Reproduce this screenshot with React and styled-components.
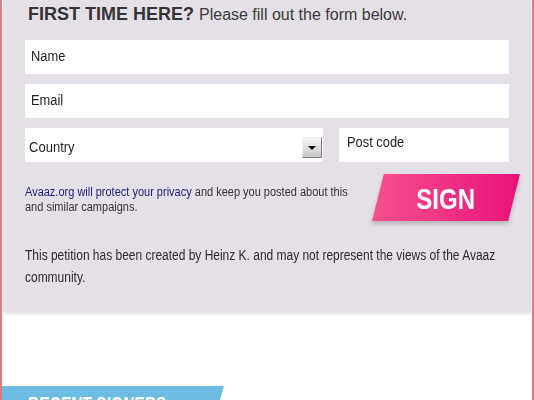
import React from 'react';
import styled, { createGlobalStyle } from 'styled-components';

const GlobalStyle = createGlobalStyle`
  html, body {
    margin: 0;
    padding: 0;
    background: #fff;
  }
  * { box-sizing: border-box; }
`;

const sans = `"Liberation Sans", Arial, sans-serif`;

// the original uses a narrow face; squeeze Liberation Sans to its width
const Narrow = styled.span`
  display: inline-block;
  white-space: nowrap;
  transform: scaleX(${(p) => p.$x || 0.85});
  transform-origin: ${(p) => (p.$center ? '50% 50%' : '0 50%')};
`;

const Page = styled.div`
  width: 534px;
  height: 400px;
  overflow: hidden;
  border-left: 2px solid #e07b7b;
  border-right: 2px solid #e07b7b;
  padding: 0 1px;
  font-family: ${sans};
`;

const Panel = styled.div`
  background: #e5dfe7;
  padding: 2px 22px 23px 22px;
  box-shadow: 0 3px 3px rgba(0, 0, 0, 0.12);
`;

const Heading = styled.h2`
  margin: 0 0 13px 3px;
  font-size: 18px;
  line-height: 24px;
  font-weight: bold;
  color: #333;
  span {
    font-weight: normal;
    font-size: 16px;
    color: #3a3a3a;
  }
`;

const Field = styled.div`
  height: 34px;
  background: #fff;
  display: flex;
  align-items: center;
  padding: 0 6px 2px;
  margin-bottom: 10px;
  font-size: 15.5px;
  color: #1e1e1e;
`;

const Row = styled.div`
  display: flex;
  gap: 16px;
`;

const Select = styled(Field)`
  flex: 0 0 298px;
  margin: 0;
  justify-content: space-between;
  padding: 0 1px 0 4px;
  span { margin-top: 4px; }
`;

const ArrowBtn = styled.div`
  width: 20px;
  height: 21px;
  margin-top: 4px;
  background: linear-gradient(#f6f6f6, #c6c6c6);
  border: 1px solid #7c7c7c;
  border-top-color: #f0f0f0;
  border-left-color: #f0f0f0;
  display: flex;
  align-items: center;
  justify-content: center;
  &::after {
    content: '';
    border-left: 4px solid transparent;
    border-right: 4px solid transparent;
    border-top: 4px solid #000;
    margin-top: 1px;
  }
`;

const PostField = styled(Field)`
  flex: 1;
  margin: 0;
  padding: 0 8px 6px;
`;

const SignRow = styled.div`
  display: flex;
  justify-content: space-between;
  align-items: flex-start;
  margin-top: 12px;
`;

const Privacy = styled.p`
  flex: 1;
  min-width: 0;
  margin: 11px 0 0 0;
  font-size: 12.5px;
  line-height: 15px;
  color: #333;
  a {
    color: #24237a;
    text-decoration: none;
  }
`;

const ButtonShadow = styled.div`
  flex: 0 0 148px;
  margin-right: -11px;
  display: flex;
  filter: drop-shadow(0 3px 2px rgba(0, 0, 0, 0.2));
`;

const SignButton = styled.button`
  width: 148px;
  height: 47px;
  border: none;
  cursor: pointer;
  background: linear-gradient(90deg, #f6518d, #e8127b);
  clip-path: polygon(8% 0, 100% 0, 92% 100%, 0 100%);
  color: #fff;
  font-family: ${sans};
  font-weight: bold;
  font-size: 30px;
  display: flex;
  align-items: center;
  justify-content: center;
  padding: 2px 0 0 0;
`;

const Disclaimer = styled.p`
  margin: 24px 0 0 0;
  width: calc(100% / 0.855);
  transform: scaleX(0.855);
  transform-origin: 0 0;
  font-size: 14px;
  line-height: 21.5px;
  color: #2c2c2c;
`;

const Gap = styled.div`
  height: 75px;
`;

const Banner = styled.div`
  width: 222px;
  height: 30px;
  margin-left: -1px;
  background: #6cbde1;
  clip-path: polygon(0 0, 100% 0, 96% 100%, 0 100%);
  padding: 7px 0 0 25px;
  font-style: italic;
  font-weight: bold;
  font-size: 20px;
  color: #fff;
`;

export default function App() {
  return (
    <>
      <GlobalStyle />
      <Page>
        <Panel>
          <Heading>
            FIRST TIME HERE? <span>Please fill out the form below.</span>
          </Heading>
          <Field><Narrow $x={0.83}>Name</Narrow></Field>
          <Field><Narrow $x={0.83}>Email</Narrow></Field>
          <Row>
            <Select>
              <Narrow $x={0.84}>Country</Narrow>
              <ArrowBtn />
            </Select>
            <PostField><Narrow $x={0.83}>Post code</Narrow></PostField>
          </Row>
          <SignRow>
            <Privacy>
              <Narrow $x={0.88}>
                <a href="#">Avaaz.org will protect your privacy</a> and keep you posted about this
                <br />
                and similar campaigns.
              </Narrow>
            </Privacy>
            <ButtonShadow>
              <SignButton>
                <Narrow $x={0.8} $center>SIGN</Narrow>
              </SignButton>
            </ButtonShadow>
          </SignRow>
          <Disclaimer>
            This petition has been created by Heinz K. and may not represent the views of the Avaaz community.
          </Disclaimer>
        </Panel>
        <Gap />
        <Banner>
          <Narrow $x={0.78}>RECENT SIGNERS</Narrow>
        </Banner>
      </Page>
    </>
  );
}
